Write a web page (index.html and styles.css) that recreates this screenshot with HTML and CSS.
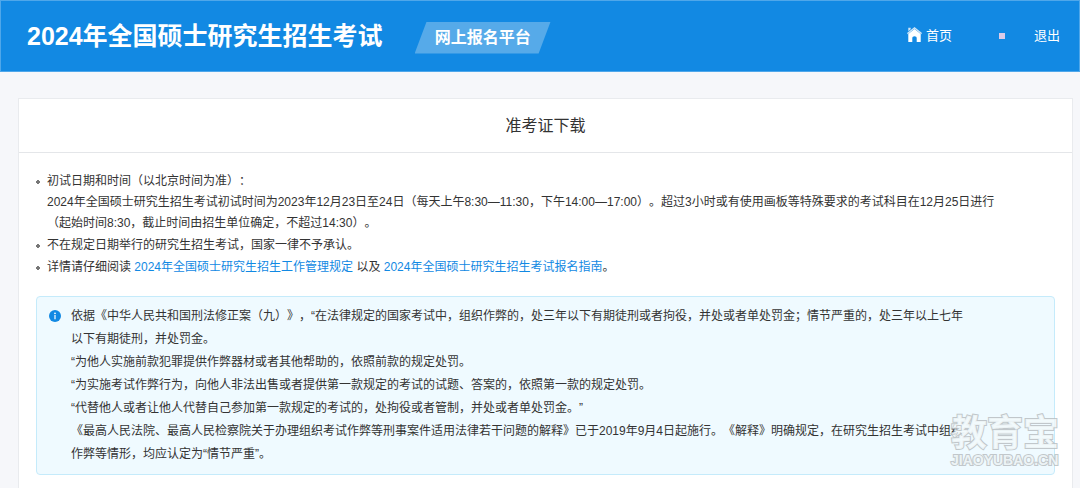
FILE: index.html
```html
<!DOCTYPE html>
<html lang="zh-CN">
<head>
  <meta charset="UTF-8">
  <meta name="viewport" content="width=device-width, initial-scale=1.0">
  <title>准考证下载</title>
  <link rel="stylesheet" href="styles.css">
</head>
<body>
  <header class="header">
    <h1 class="site-title">2024年全国硕士研究生招生考试</h1>
    <span class="platform">网上报名平台</span>
    <nav class="nav">
      <a class="nav-link" href="#">
        <svg class="home-icon" width="15" height="15" viewBox="0 0 15 15" aria-hidden="true">
          <path fill="#cfe5f8" d="M7.500 0 0 6l.8 1.200L7.500 1.800l6.700 5.400L15 6zM1.300.8h2.400v1.400L1.300 4.200z"/>
          <path fill="#fff" d="M7.500 2 1.300 7v8h4v-4.300q0-1.500 2.200-1.500t2.200 1.500V15h4V7z"/>
        </svg>
        首页
      </a>
      <span class="nav-dot"></span>
      <a class="nav-link" href="#">退出</a>
    </nav>
  </header>

  <main class="card">
    <h2 class="card-title">准考证下载</h2>
    <div class="card-body">
      <ul class="notes">
        <li>初试日期和时间（以北京时间为准）：<br>
          2024年全国硕士研究生招生考试初试时间为2023年12月23日至24日（每天上午8:30—11:30，下午14:00—17:00）。超过3小时或有使用画板等特殊要求的考试科目在12月25日进行<br>
          （起始时间8:30，截止时间由招生单位确定，不超过14:30）。</li>
        <li>不在规定日期举行的研究生招生考试，国家一律不予承认。</li>
        <li>详情请仔细阅读 <a href="#">2024年全国硕士研究生招生工作管理规定</a> 以及 <a href="#">2024年全国硕士研究生招生考试报名指南</a>。</li>
      </ul>

      <section class="alert">
        <svg class="info-icon" width="12" height="12" viewBox="0 0 12 12" aria-hidden="true">
          <circle cx="6" cy="6" r="6" fill="#1289e3"/>
          <circle cx="6" cy="3.300" r=".9" fill="#fff"/>
          <path stroke="#fff" stroke-width="1.200" d="M6 5v4.300"/>
        </svg>
        <div class="alert-text">
          <p>依据《中华人民共和国刑法修正案（九）》，“在法律规定的国家考试中，组织作弊的，处三年以下有期徒刑或者拘役，并处或者单处罚金；情节严重的，处三年以上七年<br>以下有期徒刑，并处罚金。</p>
          <p>“为他人实施前款犯罪提供作弊器材或者其他帮助的，依照前款的规定处罚。</p>
          <p>“为实施考试作弊行为，向他人非法出售或者提供第一款规定的考试的试题、答案的，依照第一款的规定处罚。</p>
          <p>“代替他人或者让他人代替自己参加第一款规定的考试的，处拘役或者管制，并处或者单处罚金。”</p>
          <p>《最高人民法院、最高人民检察院关于办理组织考试作弊等刑事案件适用法律若干问题的解释》已于2019年9月4日起施行。《解释》明确规定，在研究生招生考试中组织<br>作弊等情形，均应认定为“情节严重”。</p>
        </div>
      </section>
    </div>
  </main>

  <div class="watermark">
    <span class="watermark-name">教育宝</span>
    <span class="watermark-site">JIAOYUBAO.CN</span>
  </div>
</body>
</html>
```

FILE: styles.css
```css
* {
  box-sizing: border-box;
}

body {
  display: flex;
  flex-direction: column;
  position: relative;
  min-height: 100vh;
  margin: 0;
  background: #f6f7fa;
  color: #333;
  font-family: "Liberation Sans", "Noto Sans CJK SC", sans-serif;
  font-size: 12px;
  text-spacing-trim: space-all;
}

h1, h2, p, ul {
  margin: 0;
}

a {
  color: #1289e3;
  text-decoration: none;
}

/* header */
.header {
  display: flex;
  align-items: center;
  height: 72px;
  padding: 0 19px 0 26px;
  background: #1289e3;
  border: 1px solid #4fa7ea;
  color: #fff;
}

.site-title {
  font-size: 25px;
  line-height: 32px;
}

.platform {
  margin-left: 32px;
  padding: 0 20px;
  background: #56aae9;
  clip-path: polygon(12px 0, 100% 0, calc(100% - 12px) 100%, 0 100%);
  font-size: 16px;
  font-weight: bold;
  line-height: 32px;
  margin-top: 3px;
}

.nav {
  display: flex;
  align-items: center;
  margin-left: auto;
}

.nav-link {
  display: flex;
  align-items: center;
  gap: 4px;
  color: #fff;
  font-size: 13px;
  line-height: 20px;
}

.home-icon {
  margin-bottom: 3px;
}

.nav-dot {
  width: 6px;
  height: 6px;
  margin: 0 29px 0 47px;
  background: #dccbe8;
}

/* card */
.card {
  flex: 1;
  margin: 26px 7px 0 18px;
  background: #fff;
  border: 1px solid #e9ebee;
  border-bottom: 0;
}

.card-title {
  padding: 15px 0 14px;
  border-bottom: 1px solid #e4e6e9;
  font-size: 16px;
  font-weight: normal;
  line-height: 24px;
  text-align: center;
}

.card-body {
  padding: 18px 17px 13px;
}

.notes {
  padding: 0;
  list-style: none;
  line-height: 21px;
}

.notes li {
  margin-bottom: 1px;
  padding-left: 11px;
  background: radial-gradient(circle at 2px 11px, #777 2px, transparent 2px) no-repeat;
}

/* alert */
.alert {
  display: flex;
  gap: 10px;
  margin-top: 18px;
  padding: 8px 12px;
  background: #effaff;
  border: 1px solid #c5ebfb;
  border-radius: 4px;
  line-height: 23px;
}

.info-icon {
  flex: none;
  margin-top: 5px;
}

/* watermark */
.watermark {
  display: flex;
  flex-direction: column;
  position: absolute;
  right: 21px;
  bottom: 20px;
  color: rgba(244, 250, 252, 0.9);
  font-weight: bold;
  -webkit-text-stroke: 2px #b9bfc2;
  paint-order: stroke fill;
  opacity: 0.85;
  pointer-events: none;
}

.watermark-name {
  font-size: 36px;
  line-height: 36px;
}

.watermark-site {
  font-size: 14px;
  line-height: 16px;
}
```
